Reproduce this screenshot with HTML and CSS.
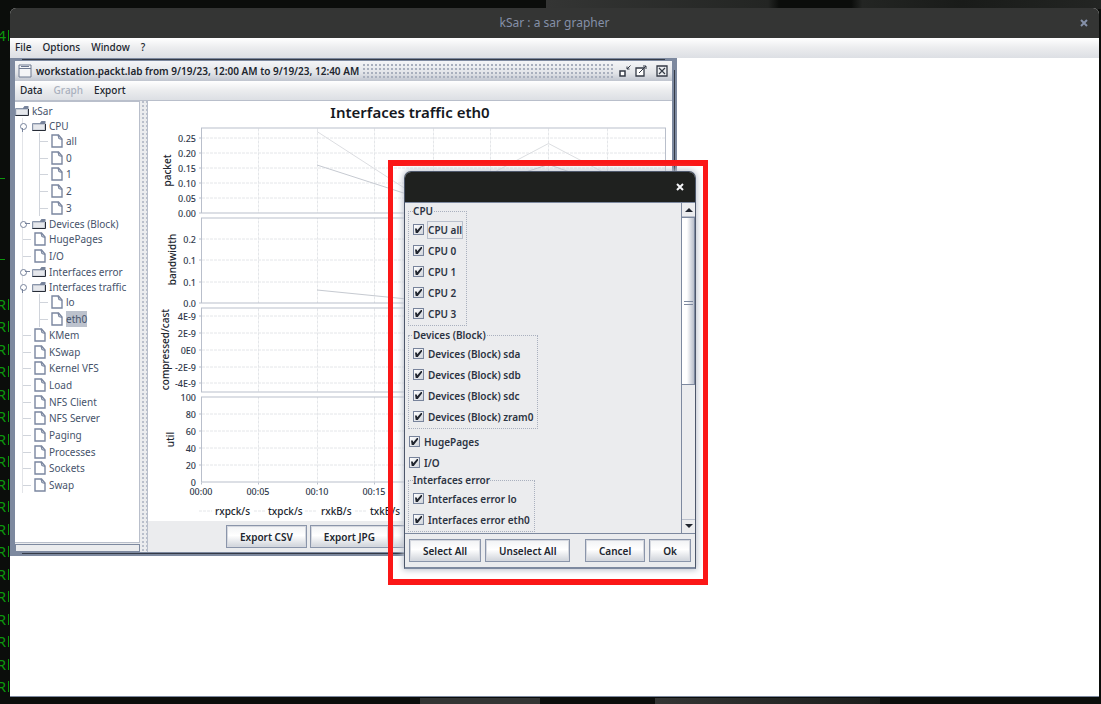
FILE: index.html
```html
<!DOCTYPE html>
<html lang="en">
<head>
<meta charset="utf-8">
<title>kSar : a sar grapher</title>
<link rel="stylesheet" href="styles.css">
</head>
<body>
<svg class="defs" aria-hidden="true">
  <symbol id="folder" viewBox="0 0 14 12">
    <path d="M1 10.500V3.500H8L9.500 1.500H13V10.500Z" fill="#c3c8d2"/>
    <path d="M1.500 5H12V9.500H1.500Z" fill="#e6e8ec"/>
    <path d="M8 3L9.500 1H13.500V4H8Z" fill="#77839b"/>
    <path d="M.5 11V3.500H8" fill="none" stroke="#8995aa"/>
    <path d="M.5 10.500H13.500V4" fill="none" stroke="#272c36"/>
  </symbol>
  <symbol id="file" viewBox="0 0 12 14">
    <path d="M1 1H7.500L11 5V13H1Z" fill="#fff" stroke="#7b87a0" stroke-width="1.400"/>
    <path d="M7 1L8 4.500L11 5.500" fill="none" stroke="#7b87a0" stroke-width="1.200"/>
  </symbol>
</svg>

<aside class="terminal">
  <div class="term-top"><span>4</span></div>
  <div class="term-mid"><i></i><i></i></div>
  <div class="term-lines">
    <span>R</span><span>R</span><span>R</span><span>R</span><span>R</span><span>R</span>
    <span>R</span><span>R</span><span>R</span><span>R</span><span>R</span><span>R</span>
    <span>R</span><span>R</span><span>R</span><span>R</span><span>R</span><span>R</span>
  </div>
</aside>

<main class="app">
  <header class="app-title">
    <h1>kSar : a sar grapher</h1>
    <button class="close" aria-label="Close"><svg viewBox="0 0 8 8"><path d="M1 1L7 7M7 1L1 7"/></svg></button>
  </header>
  <nav class="menubar">
    <button>File</button><button>Options</button><button>Window</button><button>?</button>
  </nav>

  <div class="desktop">
    <section class="frame">
      <header class="frame-title">
        <svg class="frame-icon" viewBox="0 0 14 14"><path d="M1 1H13V13H1Z" fill="#f4f5f7" stroke="#6e7a91"/><path d="M1 4.500H13M3 2.500H11" stroke="#6e7a91" fill="none"/></svg>
        <h2>workstation.packt.lab from 9/19/23, 12:00 AM to 9/19/23, 12:40 AM</h2>
        <span class="grip"></span>
        <button aria-label="Minimize"><svg viewBox="0 0 12 12"><path d="M1 6H6V11H1Z" fill="#fff" stroke="#343a46" stroke-width="1.500"/><path d="M11.500 .5L8 4M8 1.500V4H10.500" fill="none" stroke="#343a46"/></svg></button>
        <button aria-label="Maximize"><svg viewBox="0 0 12 12"><path d="M1 3H9V11H1Z" fill="#fff" stroke="#343a46" stroke-width="1.300"/><path d="M4 8L11 1M8 1H11V4" fill="none" stroke="#343a46"/></svg></button>
        <button class="frame-close" aria-label="Close frame"><svg viewBox="0 0 12 12"><path d="M1 1H11V11H1Z" fill="#eceef1" stroke="#343a46" stroke-width="1.300"/><path d="M3 3L9 9M9 3L3 9" stroke="#343a46" stroke-width="1.200"/></svg></button>
      </header>
      <nav class="menubar inner">
        <button>Data</button><button disabled>Graph</button><button>Export</button>
      </nav>
      <div class="split">
        <div class="side">
          <div class="tree">
            <div class="row folder"><svg class="ic-folder"><use href="#folder"/></svg>kSar</div>
            <ul class="root">
              <li class="node"><div class="row folder open"><svg class="ic-folder"><use href="#folder"/></svg>CPU</div>
                <ul>
                  <li class="leaf row"><svg class="ic-file"><use href="#file"/></svg>all</li>
                  <li class="leaf row"><svg class="ic-file"><use href="#file"/></svg>0</li>
                  <li class="leaf row"><svg class="ic-file"><use href="#file"/></svg>1</li>
                  <li class="leaf row"><svg class="ic-file"><use href="#file"/></svg>2</li>
                  <li class="leaf row"><svg class="ic-file"><use href="#file"/></svg>3</li>
                </ul>
              </li>
              <li class="node"><div class="row folder shut"><svg class="ic-folder"><use href="#folder"/></svg>Devices (Block)</div></li>
              <li class="leaf row"><svg class="ic-file"><use href="#file"/></svg>HugePages</li>
              <li class="leaf row"><svg class="ic-file"><use href="#file"/></svg>I/O</li>
              <li class="node"><div class="row folder shut"><svg class="ic-folder"><use href="#folder"/></svg>Interfaces error</div></li>
              <li class="node"><div class="row folder open"><svg class="ic-folder"><use href="#folder"/></svg>Interfaces traffic</div>
                <ul>
                  <li class="leaf row"><svg class="ic-file"><use href="#file"/></svg>lo</li>
                  <li class="leaf row"><svg class="ic-file"><use href="#file"/></svg><mark>eth0</mark></li>
                </ul>
              </li>
              <li class="leaf row"><svg class="ic-file"><use href="#file"/></svg>KMem</li>
              <li class="leaf row"><svg class="ic-file"><use href="#file"/></svg>KSwap</li>
              <li class="leaf row"><svg class="ic-file"><use href="#file"/></svg>Kernel VFS</li>
              <li class="leaf row"><svg class="ic-file"><use href="#file"/></svg>Load</li>
              <li class="leaf row"><svg class="ic-file"><use href="#file"/></svg>NFS Client</li>
              <li class="leaf row"><svg class="ic-file"><use href="#file"/></svg>NFS Server</li>
              <li class="leaf row"><svg class="ic-file"><use href="#file"/></svg>Paging</li>
              <li class="leaf row"><svg class="ic-file"><use href="#file"/></svg>Processes</li>
              <li class="leaf row"><svg class="ic-file"><use href="#file"/></svg>Sockets</li>
              <li class="leaf row"><svg class="ic-file"><use href="#file"/></svg>Swap</li>
            </ul>
          </div>
          <div class="progress"></div>
        </div>
        <div class="divider"></div>
        <div class="view">
          <svg class="chart" viewBox="148 102 524 419" role="img" aria-label="Interfaces traffic eth0">
            <text class="c-title" x="410" y="118" text-anchor="middle">Interfaces traffic eth0</text>
            <g class="grid">
              <path d="M202 138.500H665M202 153.500H665M202 168.500H665M202 183.500H665M202 198.500H665M202 239.500H665M202 260.500H665M202 282.500H665M202 316.500H665M202 333.500H665M202 350.500H665M202 367.500H665M202 383.500H665M202 414.500H665M202 431.500H665M202 448.500H665M202 465.500H665"/>
              <path d="M258.500 129V482M317.500 129V482M374.500 129V482M433.500 129V482M490.500 129V482M548.500 129V482M607.500 129V482"/>
            </g>
            <path class="gap" d="M200 216H667M200 306H667M200 395H667"/>
            <g class="box">
              <rect x="201.500" y="128.500" width="464" height="85"/>
              <rect x="201.500" y="218.500" width="464" height="85"/>
              <rect x="201.500" y="308.500" width="464" height="84"/>
              <rect x="201.500" y="397.500" width="464" height="85"/>
              <path d="M199 138.500H201M199 153.500H201M199 168.500H201M199 183.500H201M199 198.500H201M199 213.500H201M199 239.500H201M199 260.500H201M199 282.500H201M199 303.500H201M199 316.500H201M199 333.500H201M199 350.500H201M199 367.500H201M199 383.500H201M199 414.500H201M199 431.500H201M199 448.500H201M199 465.500H201M201.500 483V485M258.500 483V485M317.500 483V485M374.500 483V485"/>
            </g>
            <g class="series">
              <path d="M317 132L402 187L433 205L548.500 144L665 205"/>
              <path class="dark" d="M317 165.500L402 193L433 203L548.500 165L665 206"/>
              <path class="dark" d="M317 290.500L402 299L433 301"/>
            </g>
            <g class="ticks" text-anchor="end">
              <text x="196" y="142">0.25</text><text x="196" y="157">0.20</text><text x="196" y="172">0.15</text><text x="196" y="187">0.10</text><text x="196" y="202">0.05</text><text x="196" y="217">0.00</text>
              <text x="196" y="243">0.2</text><text x="196" y="264">0.1</text><text x="196" y="286">0.1</text><text x="196" y="307">0.0</text>
              <text x="196" y="320">4E-9</text><text x="196" y="337">2E-9</text><text x="196" y="354">0E0</text><text x="196" y="371">-2E-9</text><text x="196" y="387">-4E-9</text>
              <text x="196" y="401">100</text><text x="196" y="418">80</text><text x="196" y="435">60</text><text x="196" y="452">40</text><text x="196" y="469">20</text><text x="196" y="486">0</text>
            </g>
            <g class="ticks" text-anchor="middle">
              <text x="201" y="495">00:00</text><text x="258" y="495">00:05</text><text x="317" y="495">00:10</text><text x="374" y="495">00:15</text>
            </g>
            <g class="axis" text-anchor="middle">
              <text transform="translate(171 171) rotate(-90)">packet</text>
              <text transform="translate(176 260) rotate(-90)">bandwidth</text>
              <text transform="translate(169 350) rotate(-90)">compressed/cast</text>
              <text transform="translate(174 440) rotate(-90)">util</text>
            </g>
            <path class="keys" d="M199 511.500H212M254 511.500H265M305 511.500H317M355 511.500H367"/>
            <g class="axis">
              <text x="215" y="515">rxpck/s</text><text x="268" y="515">txpck/s</text><text x="321" y="515">rxkB/s</text><text x="370" y="515">txkB/s</text>
            </g>
          </svg>
          <div class="exports">
            <button class="btn">Export CSV</button><button class="btn">Export JPG</button><button class="btn" aria-label="More"></button>
          </div>
        </div>
      </div>
    </section>

    <div class="highlight">
      <section class="dialog" role="dialog" aria-label="Select graphs">
        <header class="dialog-title">
          <button class="close" aria-label="Close dialog"><svg viewBox="0 0 8 8"><path d="M1 1L7 7M7 1L1 7"/></svg></button>
        </header>
        <div class="scrollpane">
          <form class="options">
            <fieldset><legend>CPU</legend>
              <label><input type="checkbox" checked><span class="focused">CPU all</span></label>
              <label><input type="checkbox" checked><span>CPU 0</span></label>
              <label><input type="checkbox" checked><span>CPU 1</span></label>
              <label><input type="checkbox" checked><span>CPU 2</span></label>
              <label><input type="checkbox" checked><span>CPU 3</span></label>
            </fieldset>
            <fieldset><legend>Devices (Block)</legend>
              <label><input type="checkbox" checked><span>Devices (Block) sda</span></label>
              <label><input type="checkbox" checked><span>Devices (Block) sdb</span></label>
              <label><input type="checkbox" checked><span>Devices (Block) sdc</span></label>
              <label><input type="checkbox" checked><span>Devices (Block) zram0</span></label>
            </fieldset>
            <label><input type="checkbox" checked><span>HugePages</span></label>
            <label><input type="checkbox" checked><span>I/O</span></label>
            <fieldset><legend>Interfaces error</legend>
              <label><input type="checkbox" checked><span>Interfaces error lo</span></label>
              <label><input type="checkbox" checked><span>Interfaces error eth0</span></label>
            </fieldset>
          </form>
          <div class="scrollbar">
            <button aria-label="Scroll up"><svg viewBox="0 0 8 5"><path d="M0 5L4 1L8 5Z"/></svg></button>
            <div class="track"><div class="thumb"></div></div>
            <button aria-label="Scroll down"><svg viewBox="0 0 8 5"><path d="M0 0L4 4L8 0Z"/></svg></button>
          </div>
        </div>
        <footer class="dialog-actions">
          <button class="btn">Select All</button><button class="btn">Unselect All</button><button class="btn push">Cancel</button><button class="btn">Ok</button>
        </footer>
      </section>
    </div>
  </div>
</main>
</body>
</html>
```
FILE: styles.css
```css
:root {
  --ink: #2b3342;
  --slate: #7d899f;
  --line: #b9bfcb;
  --face: #ebecee;
}
* { box-sizing: border-box; }
body {
  margin: 0;
  height: 100vh;
  overflow: hidden;
  display: grid;
  grid-template-columns: 10px 1fr;
  background:
    linear-gradient(90deg, #343534, #232523 40%, #0b0d0b 42% 55%, #232523 57%, #191b19 75%, #232523) right top / 555px 9px no-repeat,
    linear-gradient(#343534, #343534) 420px bottom / 120px 6px no-repeat,
    linear-gradient(90deg, #343534, #1c1e1c) 655px bottom / 225px 6px no-repeat,
    #0b0d0b;
  color: var(--ink);
  font: 500 10px/16px "Noto Sans", "Open Sans", sans-serif;
}
h1, h2, ul { margin: 0; padding: 0; font: inherit; list-style: none; }
button { margin: 0; padding: 0; border: 0; background: none; color: inherit; font: inherit; }
svg { display: block; }
.defs { position: absolute; width: 0; height: 0; }

.terminal {
  display: flex;
  flex-direction: column;
  height: 100vh;
  overflow: hidden;
  background: #0b0d0b;
  color: #0c960c;
  font: 15px/22px "Noto Sans", sans-serif;
}
.terminal span {
  display: flex;
  justify-content: flex-end;
  height: 22px;
  padding-right: 4px;
  background: linear-gradient(#0c960c, #0c960c) 8px 6px / 1px 11px no-repeat;
}
.term-top { height: 174px; padding-top: 24px; }
.term-mid { flex: 1; display: flex; flex-direction: column; gap: 80px; padding-top: 4px; }
.term-mid i { width: 5px; height: 1px; background: #0c960c; }
.term-lines span:nth-child(even) { height: 23px; }
.term-lines { padding-bottom: 6px; }

.app {
  display: flex;
  flex-direction: column;
  margin: 8px 2px 7px 0;
  border-bottom: 1px solid var(--slate);
  border-radius: 6px 6px 0 0;
  background: #fff;
  overflow: hidden;
}
.app-title {
  display: grid;
  grid-template-columns: 30px 1fr 30px;
  align-items: center;
  height: 30px;
  background: #343534;
  color: #8590a8;
}
.app-title h1 { grid-column: 2; text-align: center; font: 12px/16px "Noto Sans", sans-serif; }
.close { display: grid; place-items: center; height: 20px; }
.close svg { width: 8px; height: 8px; fill: none; stroke: currentColor; stroke-width: 2; }

.menubar {
  display: flex;
  align-items: center;
  gap: 11px;
  height: 20px;
  padding: 0 5px 2px;
  background: linear-gradient(#fff, #ebecee 50%, #dcdfe4);
  color: #20252e;
}
.menubar.inner { border-bottom: 1px solid var(--line); }
.menubar button:disabled { color: #a9b0be; }

.desktop { position: relative; flex: 1; }
.frame {
  position: absolute;
  left: 0;
  top: 0;
  width: 667px;
  height: 498px;
  display: flex;
  flex-direction: column;
  padding: 3px 5px 4px 5px;
  background:
    linear-gradient(#343a46, #343a46) 12px 1px / 643px 1px no-repeat,
    linear-gradient(#343a46, #343a46) 12px 495px / 643px 1px no-repeat,
    linear-gradient(#343a46, #343a46) 664px 12px / 1px 474px no-repeat,
    var(--slate);
}
.frame-title {
  display: flex;
  align-items: center;
  gap: 4px;
  height: 20px;
  padding: 0 4px 0 3px;
  background: linear-gradient(#f4f5f7, #e2e4e8 60%, #c0c5cf);
  color: #20252e;
}
.frame-title h2 { font-weight: 600; white-space: nowrap; }
.grip { flex: 1; height: 14px; background: radial-gradient(circle at 1px 1px, #a9b0be 1px, transparent 1px) 0 0 / 4px 4px; }
.frame-title button svg { width: 12px; height: 12px; }
.frame-icon { width: 14px; height: 14px; }
.frame-close { margin-left: 5px; }

.split { flex: 1; display: grid; grid-template-columns: 125px 8px 1fr; min-height: 0; }
.side { display: flex; flex-direction: column; background: var(--face); }
.tree {
  flex: 1;
  padding-top: 1px;
  background: #fff;
  border: 1px solid var(--line);
  border-left: 0;
  color: #46536b;
  font-weight: 400;
}
.progress { height: 8px; margin-top: 1px; border: 1px solid var(--slate); }
.divider {
  border-right: 1px solid var(--line);
  background: radial-gradient(circle at 1px 1px, #b9bfcb 1px, transparent 1px) 2px 0 / 4px 4px, var(--face);
}
.row { display: flex; align-items: center; gap: 3px; height: 16px; white-space: nowrap; }
.folder { height: 15px; }
.ic-folder { width: 14px; height: 12px; }
.ic-file { width: 12px; height: 14px; }
.root { margin-left: 7px; border-left: 1px solid #e2e4e8; }
.node ul { margin-left: 16px; border-left: 1px solid #d0d4db; }
.leaf::before { content: ""; width: 8px; height: 1px; background: #d0d4db; }
.leaf + .leaf { margin-top: 1px; }
.leaf:nth-child(3n) { margin-top: 0; }
.node > .folder { padding-left: 9px; position: relative; }
.node > .folder::before {
  content: "";
  position: absolute;
  left: -3px;
  top: 5px;
  width: 5px;
  height: 5px;
  border: 1px solid #77839b;
  border-radius: 50%;
  background: #fff;
}
.node > .folder::after { content: ""; position: absolute; background: #77839b; }
.node > .shut::after { left: 2px; top: 7px; width: 5px; height: 1px; }
.node > .open::after { left: -1px; top: 10px; width: 1px; height: 4px; }
mark { background: #bcc2cd; color: inherit; }

.view { display: flex; flex-direction: column; background: #fff; min-width: 0; }
.chart { width: 100%; flex: 1; min-height: 0; }
.c-title { font-size: 15px; font-weight: 600; fill: #15181e; }
.ticks { font-size: 9px; font-weight: 500; fill: #2f394b; }
.axis { font-size: 10px; font-weight: 500; fill: #20252e; }
.grid path, .keys { fill: none; stroke: #e4e6e9; stroke-dasharray: 3 1; }
.gap { stroke: #fff; stroke-width: 5; }
.box { fill: none; stroke: #b9bfcb; }
.series { fill: none; stroke: #dcdee1; }
.series .dark { stroke: #c6cad1; }
.exports { display: flex; gap: 3px; align-items: center; height: 31px; padding-left: 78px; background: var(--face); }

.btn {
  height: 23px;
  padding: 0 13px;
  border: 1px solid #8a95aa;
  box-shadow: inset 0 0 0 1px #d5d8df;
  background: linear-gradient(#f1f2f4, #fff 45%, #cfd3da);
  color: #20252e;
  font-weight: 600;
  white-space: nowrap;
}

.highlight {
  position: absolute;
  left: 378px;
  top: 102px;
  width: 320px;
  height: 425px;
  padding: 5px 7px 10px 11px;
  border: 6px solid #fb1717;
  border-left-width: 5px;
  border-right-width: 5px;
}
.dialog {
  height: 100%;
  display: flex;
  flex-direction: column;
  border: 1px solid #4d576a;
  border-bottom: 2px solid var(--slate);
  border-radius: 7px 7px 0 0;
  background: var(--face);
  box-shadow: 0 0 6px 1px #b9bfcb;
  overflow: hidden;
  font-weight: 600;
}
.dialog-title { display: flex; justify-content: flex-end; align-items: center; height: 30px; padding-right: 11px; background: #1f211f; color: #f4f5f7; }
.scrollpane { flex: 1; display: grid; grid-template-columns: 1fr 14px; min-height: 0; border-top: 1px solid var(--slate); border-bottom: 1px solid var(--slate); }
.options { display: flex; flex-direction: column; align-items: flex-start; gap: 1px; padding-left: 3px; min-height: 0; overflow: hidden; }
fieldset { margin: 0; padding: 0 4px 1px; border: 1px dotted #a9b0be; }
legend { padding: 0; height: 16px; }
label { display: flex; align-items: center; gap: 4px; height: 21px; white-space: nowrap; }
.options > label { padding: 3px 0 0 1px; height: 20px; }
label .focused { outline: 1px solid var(--line); }
input[type="checkbox"] {
  appearance: none;
  width: 11px;
  height: 11px;
  margin: 0;
  border: 1px solid #77839b;
  background: linear-gradient(135deg, #fff, #d0d4db);
  display: grid;
  place-items: center;
}
input[type="checkbox"]:checked::before {
  content: "";
  width: 7px;
  height: 7px;
  background: #20252e;
  clip-path: polygon(0 35%, 25% 35%, 32% 60%, 85% 0, 100% 0, 100% 20%, 40% 100%, 10% 100%);
}
.scrollbar { display: flex; flex-direction: column; border-left: 1px solid var(--slate); }
.scrollbar button { height: 13px; display: grid; place-items: center; }
.scrollbar button svg { width: 8px; height: 5px; fill: #20252e; }
.track { flex: 1; border: 1px solid var(--line); border-width: 1px 0; }
.thumb {
  height: 168px;
  border: 1px solid var(--slate);
  border-left: 0;
  background:
    linear-gradient(var(--slate), var(--slate)) center 83px / 9px 1px no-repeat,
    linear-gradient(var(--slate), var(--slate)) center 86px / 9px 1px no-repeat,
    linear-gradient(90deg, #fff 40%, #b9bfcb);
}
.dialog-actions { display: flex; align-items: center; gap: 4px; height: 33px; padding: 0 4px; }
.push { margin-left: auto; }
```
